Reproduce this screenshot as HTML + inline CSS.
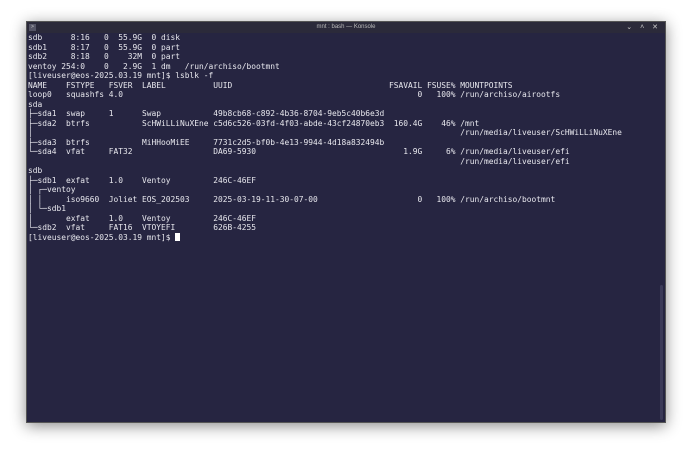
<!DOCTYPE html>
<html><head><meta charset="utf-8"><style>
html,body{margin:0;padding:0;width:690px;height:451px;background:#fff;overflow:hidden}
.win{position:absolute;left:26px;top:21px;width:638px;height:400px;background:#262541;box-shadow:0 3px 14px rgba(0,0,0,0.45);border:1px solid #555}
.tb{position:absolute;left:0;top:0;width:638px;height:11px;background:#2b2a3a;color:#bbb;font:6px "Liberation Sans",sans-serif;text-align:center;line-height:11px}
.tb .ic{position:absolute;left:2px;top:2px;width:7px;height:7px;background:#556;color:#ccc;font-size:5px;line-height:7px}
.tb .ctl{position:absolute;right:4px;top:0;font-size:7px;color:#ccc;letter-spacing:3px}
pre{position:absolute;left:1px;top:11px;margin:0;font:7.9px/9.52px "DejaVu Sans Mono","Liberation Mono",monospace;color:#e8e8ee;white-space:pre}
.cur{display:inline-block;width:5px;height:8px;background:#fff;vertical-align:-1px}
.sb{position:absolute;right:2px;top:263px;width:3px;height:135px;background:#3b3a58;border-radius:2px}
</style></head><body>
<div class="win">
<div class="tb"><span class="ic">&gt;</span>mnt : bash — Konsole<span class="ctl">⌄ ˄ ✕</span></div>
<pre>sdb      8:16   0  55.9G  0 disk
sdb1     8:17   0  55.9G  0 part
sdb2     8:18   0    32M  0 part
ventoy 254:0    0   2.9G  1 dm   /run/archiso/bootmnt
[liveuser@eos-2025.03.19 mnt]$ lsblk -f
NAME    FSTYPE   FSVER  LABEL          UUID                                 FSAVAIL FSUSE% MOUNTPOINTS
loop0   squashfs 4.0                                                              0   100% /run/archiso/airootfs
sda
├─sda1  swap     1      Swap           49b8cb68-c892-4b36-8704-9eb5c40b6e3d
├─sda2  btrfs           ScHWiLLiNuXEne c5d6c526-03fd-4f03-abde-43cf24870eb3  160.4G    46% /mnt
│                                                                                          /run/media/liveuser/ScHWiLLiNuXEne
├─sda3  btrfs           MiHHooMiEE     7731c2d5-bf0b-4e13-9944-4d18a832494b
└─sda4  vfat     FAT32                 DA69-5930                               1.9G     6% /run/media/liveuser/efi
                                                                                           /run/media/liveuser/efi
sdb
├─sdb1  exfat    1.0    Ventoy         246C-46EF
│ ┌─ventoy
│ │     iso9660  Joliet EOS_202503     2025-03-19-11-30-07-00                     0   100% /run/archiso/bootmnt
│ └─sdb1
│       exfat    1.0    Ventoy         246C-46EF
└─sdb2  vfat     FAT16  VTOYEFI        626B-4255
[liveuser@eos-2025.03.19 mnt]$ <span class="cur"></span></pre>
<div class="sb"></div>
</div>
</body></html>
